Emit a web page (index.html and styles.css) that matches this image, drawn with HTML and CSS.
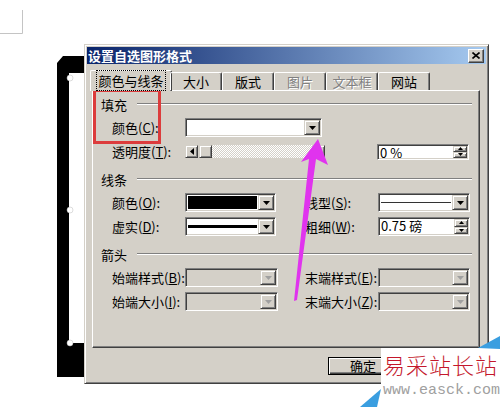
FILE: index.html
```html
<!DOCTYPE html>
<html lang="zh-CN">
<head>
    <meta charset="UTF-8">
    <meta name="viewport" content="width=device-width, initial-scale=1.0">
    <title>设置自选图形格式</title>
    <link rel="stylesheet" href="styles.css">
</head>
<body>
    <!-- the drawing canvas behind the dialog -->
    <svg class="canvas" width="500" height="407" viewBox="0 0 500 407">
        <path class="crop" d="M0,33.5 H22.5 V10"></path>
        <path class="frame" fill-rule="evenodd" d="M57,63 L63,56 H200 V377 H57 Z M69,73 V343 H200 V73 Z"></path>
        <circle class="handle" cx="70" cy="78" r="3"></circle>
        <circle class="handle" cx="70" cy="210" r="3"></circle>
        <circle class="handle" cx="70" cy="343" r="3"></circle>
    </svg>

    <div class="dialog">
        <div class="titlebar">
            <span class="title">设置自选图形格式</span>
            <button class="close">
                <svg viewBox="0 0 8 7"><path d="M0.5,0.5 L7.5,6.5 M7.5,0.5 L0.5,6.5"></path></svg>
            </button>
        </div>

        <div class="tabs">
            <div class="tab active"><span class="focus">颜色与线条</span></div>
            <div class="tab">大小</div>
            <div class="tab">版式</div>
            <div class="tab disabled">图片</div>
            <div class="tab disabled">文本框</div>
            <div class="tab">网站</div>
        </div>

        <div class="panel">
            <section class="group">
                <div class="group-title">填充</div>
                <div class="row">
                    <span class="label">颜色(<u>C</u>):</span>
                    <div class="combo wide">
                        <span class="swatch"></span>
                        <span class="drop"><svg viewBox="0 0 7 4"><polygon points="0,0 7,0 3.5,4"></polygon></svg></span>
                    </div>
                </div>
                <div class="row">
                    <span class="label">透明度(<u>T</u>):</span>
                    <div class="slider">
                        <span class="knob"><svg viewBox="0 0 4 7"><polygon points="4,0 4,7 0,3.5"></polygon></svg></span>
                        <span class="knob thumb"></span>
                        <span class="track"></span>
                        <span class="knob"><svg viewBox="0 0 4 7"><polygon points="0,0 0,7 4,3.5"></polygon></svg></span>
                    </div>
                    <div class="spin short">
                        <span class="value">0 %</span>
                        <span class="spin-btns">
                            <span><svg viewBox="0 0 5 3"><polygon points="0,3 5,3 2.5,0"></polygon></svg></span>
                            <span><svg viewBox="0 0 5 3"><polygon points="0,0 5,0 2.5,3"></polygon></svg></span>
                        </span>
                    </div>
                </div>
            </section>

            <section class="group">
                <div class="group-title">线条</div>
                <div class="row">
                    <span class="label">颜色(<u>O</u>):</span>
                    <div class="combo">
                        <span class="swatch black"></span>
                        <span class="drop"><svg viewBox="0 0 7 4"><polygon points="0,0 7,0 3.5,4"></polygon></svg></span>
                    </div>
                    <span class="label right">线型(<u>S</u>):</span>
                    <div class="combo">
                        <span class="stroke thin"></span>
                        <span class="drop"><svg viewBox="0 0 7 4"><polygon points="0,0 7,0 3.5,4"></polygon></svg></span>
                    </div>
                </div>
                <div class="row">
                    <span class="label">虚实(<u>D</u>):</span>
                    <div class="combo">
                        <span class="stroke"></span>
                        <span class="drop"><svg viewBox="0 0 7 4"><polygon points="0,0 7,0 3.5,4"></polygon></svg></span>
                    </div>
                    <span class="label right">粗细(<u>W</u>):</span>
                    <div class="spin">
                        <span class="value">0.75 磅</span>
                        <span class="spin-btns">
                            <span><svg viewBox="0 0 5 3"><polygon points="0,3 5,3 2.5,0"></polygon></svg></span>
                            <span><svg viewBox="0 0 5 3"><polygon points="0,0 5,0 2.5,3"></polygon></svg></span>
                        </span>
                    </div>
                </div>
            </section>

            <section class="group">
                <div class="group-title">箭头</div>
                <div class="row">
                    <span class="label">始端样式(<u>B</u>):</span>
                    <div class="combo off">
                        <span class="swatch"></span>
                        <span class="drop"><svg viewBox="0 0 7 4"><polygon points="0,0 7,0 3.5,4"></polygon></svg></span>
                    </div>
                    <span class="label right">末端样式(<u>E</u>):</span>
                    <div class="combo off">
                        <span class="swatch"></span>
                        <span class="drop"><svg viewBox="0 0 7 4"><polygon points="0,0 7,0 3.5,4"></polygon></svg></span>
                    </div>
                </div>
                <div class="row">
                    <span class="label">始端大小(<u>I</u>):</span>
                    <div class="combo off">
                        <span class="swatch"></span>
                        <span class="drop"><svg viewBox="0 0 7 4"><polygon points="0,0 7,0 3.5,4"></polygon></svg></span>
                    </div>
                    <span class="label right">末端大小(<u>Z</u>):</span>
                    <div class="combo off">
                        <span class="swatch"></span>
                        <span class="drop"><svg viewBox="0 0 7 4"><polygon points="0,0 7,0 3.5,4"></polygon></svg></span>
                    </div>
                </div>
            </section>
        </div>

        <div class="buttons">
            <button class="btn default">确定</button>
        </div>
    </div>

    <!-- annotations drawn over the screenshot -->
    <div class="callout"></div>
    <svg class="pointer" width="500" height="407" viewBox="0 0 500 407">
        <polygon points="318,139 328,165 316,159 297,300 294,301 309,159 301,162"></polygon>
    </svg>

    <div class="watermark">
        <svg class="watermark-bg" viewBox="0 0 140 71">
            <polygon class="paper" points="21,12 118,12 140,12 140,71 17,71 21,53"></polygon>
            <polygon class="ribbon" points="118,12 140,0 140,13"></polygon>
            <polygon class="ribbon" points="0,71 21,53 17,71"></polygon>
        </svg>
        <div class="brand">易采站长站</div>
        <div class="url">www.easck.com</div>
    </div>
</body>
</html>
```

FILE: styles.css
```css
* {
    box-sizing: border-box;
}

body {
    margin: 0;
    width: 500px;
    height: 407px;
    position: relative;
    overflow: hidden;
    background: #fff;
    font-family: "Noto Sans CJK SC", "Noto Sans", sans-serif;
    font-size: 13px;
    color: #000;
}

.canvas {
    position: absolute;
    left: 0;
    top: 0;
}

.crop {
    fill: none;
    stroke: #c4c4c4;
    stroke-width: 1;
}

.frame {
    fill: #000;
}

.handle {
    fill: #fff;
    stroke: #bbb;
    stroke-width: 0.5;
}

/* dialog window */
.dialog {
    position: absolute;
    left: 84px;
    top: 44px;
    width: 405px;
    height: 340px;
    padding: 2px 2px 0 2px;
    background: #d4d0c8;
    border: 1px solid;
    border-color: #d4d0c8 #404040 #404040 #d4d0c8;
    box-shadow: inset 1px 1px #fff, inset -1px -1px #808080;
}

.titlebar {
    display: flex;
    align-items: center;
    justify-content: space-between;
    height: 17px;
    padding: 0 2px 0 1px;
    background: linear-gradient(to right, #0a246a, #a6caf0);
}

.title {
    color: #fff;
    font-weight: 700;
    font-size: 13px;
    line-height: 17px;
}

.close {
    display: flex;
    align-items: center;
    justify-content: center;
    width: 16px;
    height: 14px;
    padding: 0;
    background: #d4d0c8;
    border: 1px solid;
    border-color: #fff #404040 #404040 #fff;
    box-shadow: inset -1px -1px #808080;
}

.close svg {
    width: 8px;
    height: 7px;
    stroke: #000;
    stroke-width: 1.6;
}

/* tabs */
.tabs {
    position: relative;
    z-index: 1;
    display: flex;
    align-items: flex-end;
    height: 20px;
    margin-top: 6px;
    padding-left: 5px;
}

.tab {
    width: 52px;
    height: 18px;
    line-height: 17px;
    text-align: center;
    white-space: nowrap;
    border-top: 1px solid #fff;
    border-left: 1px solid #fff;
    border-right: 1px solid #404040;
    border-radius: 2px 2px 0 0;
    box-shadow: inset -1px 0 #808080;
}

.tab.active {
    width: 82px;
    height: 21px;
    margin: 0 -2px -1px;
    line-height: 19px;
    background: #d4d0c8;
}

.tab.disabled {
    color: #808080;
    text-shadow: 1px 1px #fff;
}

.focus {
    outline: 1px dotted #000;
    padding: 0 1px;
}

/* tab page */
.panel {
    height: 258px;
    margin: 0 6px 0 5px;
    padding: 5px 7px 0 8px;
    border: 1px solid;
    border-color: #fff #404040 #404040 #fff;
    box-shadow: inset -1px -1px #808080;
}

.group {
    display: flex;
    flex-direction: column;
    gap: 5px;
}

.group + .group {
    margin-top: 10px;
}

.group-title {
    display: flex;
    align-items: center;
    height: 16px;
    margin-bottom: 1px;
}

.group-title::after {
    content: "";
    flex: 1;
    margin-left: 10px;
    border-top: 1px solid #808080;
    border-bottom: 1px solid #fff;
}

.row {
    display: flex;
    align-items: center;
    height: 19px;
    padding-left: 11px;
}

.label {
    width: 73px;
    white-space: nowrap;
}

.label.right {
    margin-left: 29px;
}

/* sunken fields */
.combo,
.spin {
    display: flex;
    width: 91px;
    height: 19px;
    padding: 1px;
    background: #fff;
    border: 1px solid;
    border-color: #808080 #fff #fff #808080;
    box-shadow: inset 1px 1px #404040, inset -1px -1px #d4d0c8;
}

.combo.wide {
    width: 137px;
}

.combo.off {
    width: 93px;
    background: #d4d0c8;
}

.combo.off + .label.right {
    margin-left: 27px;
}

.label.right + .combo,
.label.right + .spin {
    width: 92px;
}

.swatch {
    flex: 1;
    margin: 1px;
}

.swatch.black {
    background: #000;
}

.stroke {
    flex: 1;
    display: flex;
    align-items: center;
    padding: 0 1px;
}

.stroke::before {
    content: "";
    flex: 1;
    height: 3px;
    background: #000;
}

.stroke.thin::before {
    height: 1px;
    background: #333;
}

.drop,
.knob,
.spin-btns span {
    display: flex;
    align-items: center;
    justify-content: center;
    background: #d4d0c8;
    border: 1px solid;
    border-color: #d4d0c8 #404040 #404040 #d4d0c8;
    box-shadow: inset 1px 1px #fff, inset -1px -1px #808080;
}

.drop {
    width: 16px;
}

.drop svg {
    width: 7px;
    height: 4px;
    fill: #000;
}

.combo.off .drop svg {
    fill: #a0a0a0;
}

/* transparency slider */
.slider {
    display: flex;
    width: 140px;
    height: 13px;
}

.knob {
    width: 13px;
}

.knob svg {
    width: 4px;
    height: 7px;
    fill: #000;
}

.thumb {
    margin-left: 1px;
}

.track {
    flex: 1;
    background: repeating-conic-gradient(#fff 0 25%, #d4d0c8 0 50%) 0 0 / 2px 2px;
}

/* spin boxes */
.spin.short {
    width: 92px;
    height: 16px;
    margin-left: 52px;
}

.spin .value {
    flex: 1;
    padding-left: 1px;
    line-height: 14px;
    white-space: nowrap;
}

.spin-btns {
    display: flex;
    flex-direction: column;
    width: 14px;
}

.spin-btns span {
    flex: 1;
}

.spin-btns svg {
    width: 5px;
    height: 3px;
    fill: #000;
}

/* dialog buttons */
.buttons {
    display: flex;
    padding: 9px 0 0 241px;
}

.btn {
    width: 70px;
    height: 18px;
    padding: 0;
    font: inherit;
    line-height: 14px;
    background: #d4d0c8;
    border: 1px solid;
    border-color: #fff #404040 #404040 #fff;
    box-shadow: inset -1px -1px #808080;
}

.btn.default {
    border-color: #000;
    box-shadow: inset 1px 1px #fff, inset -1px -1px #404040, inset -2px -2px #808080;
}

/* annotations */
.callout {
    position: absolute;
    left: 93px;
    top: 89px;
    width: 68px;
    height: 55px;
    border: 3px solid #dc3c3c;
}

.pointer {
    position: absolute;
    left: 0;
    top: 0;
    pointer-events: none;
}

.pointer polygon {
    fill: #e033ee;
}

.watermark {
    position: absolute;
    left: 360px;
    top: 336px;
    width: 140px;
    height: 71px;
    padding: 16px 0 0 23px;
}

.watermark-bg {
    position: absolute;
    left: 0;
    top: 0;
    width: 140px;
    height: 71px;
}

.paper {
    fill: #fff;
}

.ribbon {
    fill: #3a9ee0;
}

.brand {
    position: relative;
    font-size: 22px;
    line-height: 24px;
    letter-spacing: 1px;
    font-weight: 300;
    color: #c4182c;
    white-space: nowrap;
}

.url {
    position: relative;
    margin-top: 7px;
    font-family: "Liberation Mono", monospace;
    font-size: 15px;
    line-height: 16px;
    color: #a0a0a0;
    white-space: nowrap;
}
```
